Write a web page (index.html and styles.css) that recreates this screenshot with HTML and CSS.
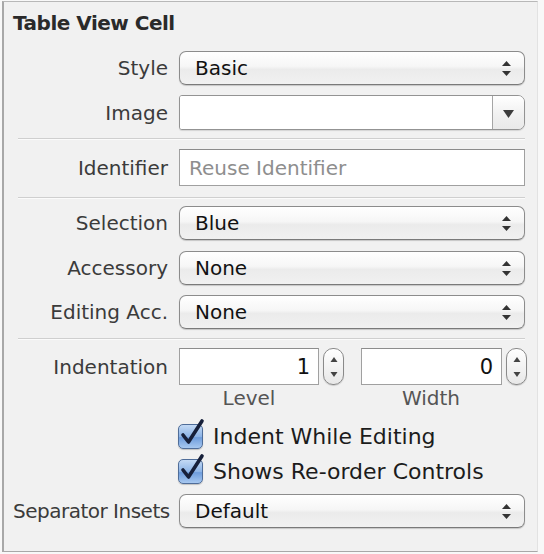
FILE: index.html
```html
<!DOCTYPE html>
<html>
<head>
<meta charset="utf-8">
<link rel="stylesheet" href="styles.css">
</head>
<body>
<div class="panel">
  <div class="title">Table View Cell</div>

  <div class="row r-style">
    <div class="label">Style</div>
    <div class="popup"><span class="val">Basic</span>
      <svg class="updown" width="9" height="15" viewBox="0 0 9 15"><polygon points="0,5 4.5,0 9,5"/><polygon points="0,10 9,10 4.5,15"/></svg>
    </div>
  </div>

  <div class="row r-image">
    <div class="label">Image</div>
    <div class="combo">
      <div class="combo-field"></div>
      <div class="combo-btn"><svg width="11" height="8" viewBox="0 0 11 8"><polygon points="0,0 11,0 5.5,8"/></svg></div>
    </div>
  </div>

  <div class="sep s1"></div>

  <div class="row r-ident">
    <div class="label">Identifier</div>
    <div class="field placeholder">Reuse Identifier</div>
  </div>

  <div class="sep s2"></div>

  <div class="row r-sel">
    <div class="label">Selection</div>
    <div class="popup"><span class="val">Blue</span>
      <svg class="updown" width="9" height="15" viewBox="0 0 9 15"><polygon points="0,5 4.5,0 9,5"/><polygon points="0,10 9,10 4.5,15"/></svg>
    </div>
  </div>

  <div class="row r-acc">
    <div class="label">Accessory</div>
    <div class="popup"><span class="val">None</span>
      <svg class="updown" width="9" height="15" viewBox="0 0 9 15"><polygon points="0,5 4.5,0 9,5"/><polygon points="0,10 9,10 4.5,15"/></svg>
    </div>
  </div>

  <div class="row r-edit">
    <div class="label">Editing Acc.</div>
    <div class="popup"><span class="val">None</span>
      <svg class="updown" width="9" height="15" viewBox="0 0 9 15"><polygon points="0,5 4.5,0 9,5"/><polygon points="0,10 9,10 4.5,15"/></svg>
    </div>
  </div>

  <div class="sep s3"></div>

  <div class="row r-indent">
    <div class="label indent-label">Indentation</div>
    <div class="steps">
      <div class="stepgroup g1">
        <div class="steprow">
          <div class="field num">1</div>
          <div class="stepper"><svg width="8" height="22" viewBox="0 0 8 22"><polygon points="0.5,6 4,1 7.5,6"/><polygon points="0.5,16 7.5,16 4,21"/></svg></div>
        </div>
        <div class="caption">Level</div>
      </div>
      <div class="stepgroup g2">
        <div class="steprow">
          <div class="field num">0</div>
          <div class="stepper"><svg width="8" height="22" viewBox="0 0 8 22"><polygon points="0.5,6 4,1 7.5,6"/><polygon points="0.5,16 7.5,16 4,21"/></svg></div>
        </div>
        <div class="caption">Width</div>
      </div>
    </div>
  </div>

  <div class="row r-check1">
    <div class="label"></div>
    <div class="check">
      <span class="box"><svg width="30" height="32" viewBox="0 0 30 32"><path d="M7 17 L12.5 24 L26 3"/></svg></span>
      <span class="ctext">Indent While Editing</span>
    </div>
  </div>

  <div class="row r-check2">
    <div class="label"></div>
    <div class="check">
      <span class="box"><svg width="30" height="32" viewBox="0 0 30 32"><path d="M7 17 L12.5 24 L26 3"/></svg></span>
      <span class="ctext">Shows Re-order Controls</span>
    </div>
  </div>

  <div class="row r-insets">
    <div class="label tight">Separator Insets</div>
    <div class="popup"><span class="val">Default</span>
      <svg class="updown" width="9" height="15" viewBox="0 0 9 15"><polygon points="0,5 4.5,0 9,5"/><polygon points="0,10 9,10 4.5,15"/></svg>
    </div>
  </div>
</div>
</body>
</html>
```

FILE: styles.css
```css
* { box-sizing: border-box; }

html, body {
  margin: 0;
  padding: 0;
  background: #f8f8f8;
}

body {
  font-family: "DejaVu Sans", "Liberation Sans", sans-serif;
  color: #333;
}

.panel {
  margin: 1px 0 0 2px;
  width: 536px;
  height: 551px;
  background: #f1f1f1;
  border-top: 1px solid #b8b8b8;
  border-left: 2px solid #a8a8a8;
  border-bottom: 1px solid #a8a8a8;
  border-right: 1px solid #e2e2e2;
  padding: 9px 11px 0 9px;
  display: flex;
  flex-direction: column;
}

.title {
  font-weight: bold;
  font-size: 20px;
  letter-spacing: -0.5px;
  line-height: 24px;
  color: #2a2a2a;
  height: 24px;
  margin-bottom: 16px;
}

.row {
  display: grid;
  grid-template-columns: 155px 346px;
  column-gap: 11px;
  align-items: center;
}

.label {
  text-align: right;
  font-size: 20px;
  color: #3b3b3b;
  white-space: nowrap;
}

.label.tight { letter-spacing: -0.5px; }

.popup {
  height: 34px;
  border: 1px solid #8c8c8c;
  border-bottom-color: #7a7a7a;
  border-radius: 7px;
  background: linear-gradient(#ffffff, #f6f6f6 45%, #ebebeb 55%, #f1f1f1);
  box-shadow: 0 1px 1px rgba(0,0,0,0.18);
  display: flex;
  align-items: center;
  justify-content: space-between;
  padding: 0 13px 0 15px;
}

.popup .val {
  font-size: 20px;
  color: #111;
}

.updown polygon { fill: #333; }

.r-image { margin-top: 10px; }

.combo {
  height: 35px;
  display: flex;
  border: 1px solid #939393;
  border-radius: 3px 7px 7px 3px;
  background: #fff;
  box-shadow: 0 1px 1px rgba(0,0,0,0.12);
  overflow: hidden;
}

.combo-field { flex: 1; background: #fff; }

.combo-btn {
  width: 32px;
  border-left: 1px solid #a5a5a5;
  background: linear-gradient(#ffffff, #f2f2f2 50%, #e9e9e9);
  display: flex;
  align-items: center;
  justify-content: center;
  padding-top: 2px;
}

.combo-btn polygon { fill: #3c3c3c; }

.sep {
  height: 2px;
  margin-left: 5px;
  width: 507px;
  border-top: 1px solid #cfcfcf;
  border-bottom: 1px solid #fbfbfb;
}

.s1 { margin-top: 8px; }
.s2 { margin-top: 11px; }
.s3 { margin-top: 9px; }

.field {
  height: 37px;
  border: 1px solid #a0a0a0;
  border-top-color: #8c8c8c;
  background: #fff;
  font-size: 20px;
  display: flex;
  align-items: center;
  padding: 0 9px;
  color: #111;
}

.field.placeholder { color: #8e8e8e; }

.r-ident { margin-top: 9px; }
.r-sel { margin-top: 7px; }
.r-acc { margin-top: 11px; }
.r-edit { margin-top: 10px; }
.r-indent { margin-top: 8px; align-items: start; }

.indent-label {
  line-height: 24px;
  margin-top: 7px;
}

.steps {
  display: flex;
  gap: 17px;
}

.stepgroup {
  display: flex;
  flex-direction: column;
}

.steprow {
  display: flex;
  gap: 4px;
  align-items: center;
}

.g1 .field { width: 140px; }
.g2 .field { width: 141px; }

.field.num {
  justify-content: flex-end;
  padding-right: 8px;
  font-size: 21px;
  color: #111;
}

.stepper {
  width: 21px;
  height: 37px;
  border: 1px solid #8a8a8a;
  border-radius: 10px;
  background: linear-gradient(#ffffff, #f3f3f3 50%, #e8e8e8);
  box-shadow: 0 1px 1px rgba(0,0,0,0.15);
  display: flex;
  align-items: center;
  justify-content: center;
}

.stepper polygon { fill: #444; }

.caption {
  width: 140px;
  text-align: center;
  font-size: 20px;
  line-height: 24px;
  color: #555;
  margin-top: 1px;
}

.check {
  display: flex;
  align-items: center;
  height: 28px;
  margin-left: -1px;
}

.r-check1 { margin-top: 12px; }
.r-check2 { margin-top: 7px; }

.box {
  position: relative;
  width: 25px;
  height: 25px;
  border: 1px solid #4f6d99;
  border-radius: 5px;
  background: linear-gradient(#c4daf5, #8db4e6 50%, #6f9ddc 55%, #a7c8f0);
  box-shadow: 0 1px 1px rgba(0,0,0,0.2);
  flex: none;
}

.box svg {
  position: absolute;
  left: -3px;
  top: -7px;
}

.box path {
  fill: none;
  stroke: #17203a;
  stroke-width: 3.6;
  stroke-linecap: round;
  stroke-linejoin: round;
}

.ctext {
  margin-left: 10px;
  font-size: 22px;
  color: #1c1c1c;
  white-space: nowrap;
}

.r-insets { margin-top: 9px; }
```
